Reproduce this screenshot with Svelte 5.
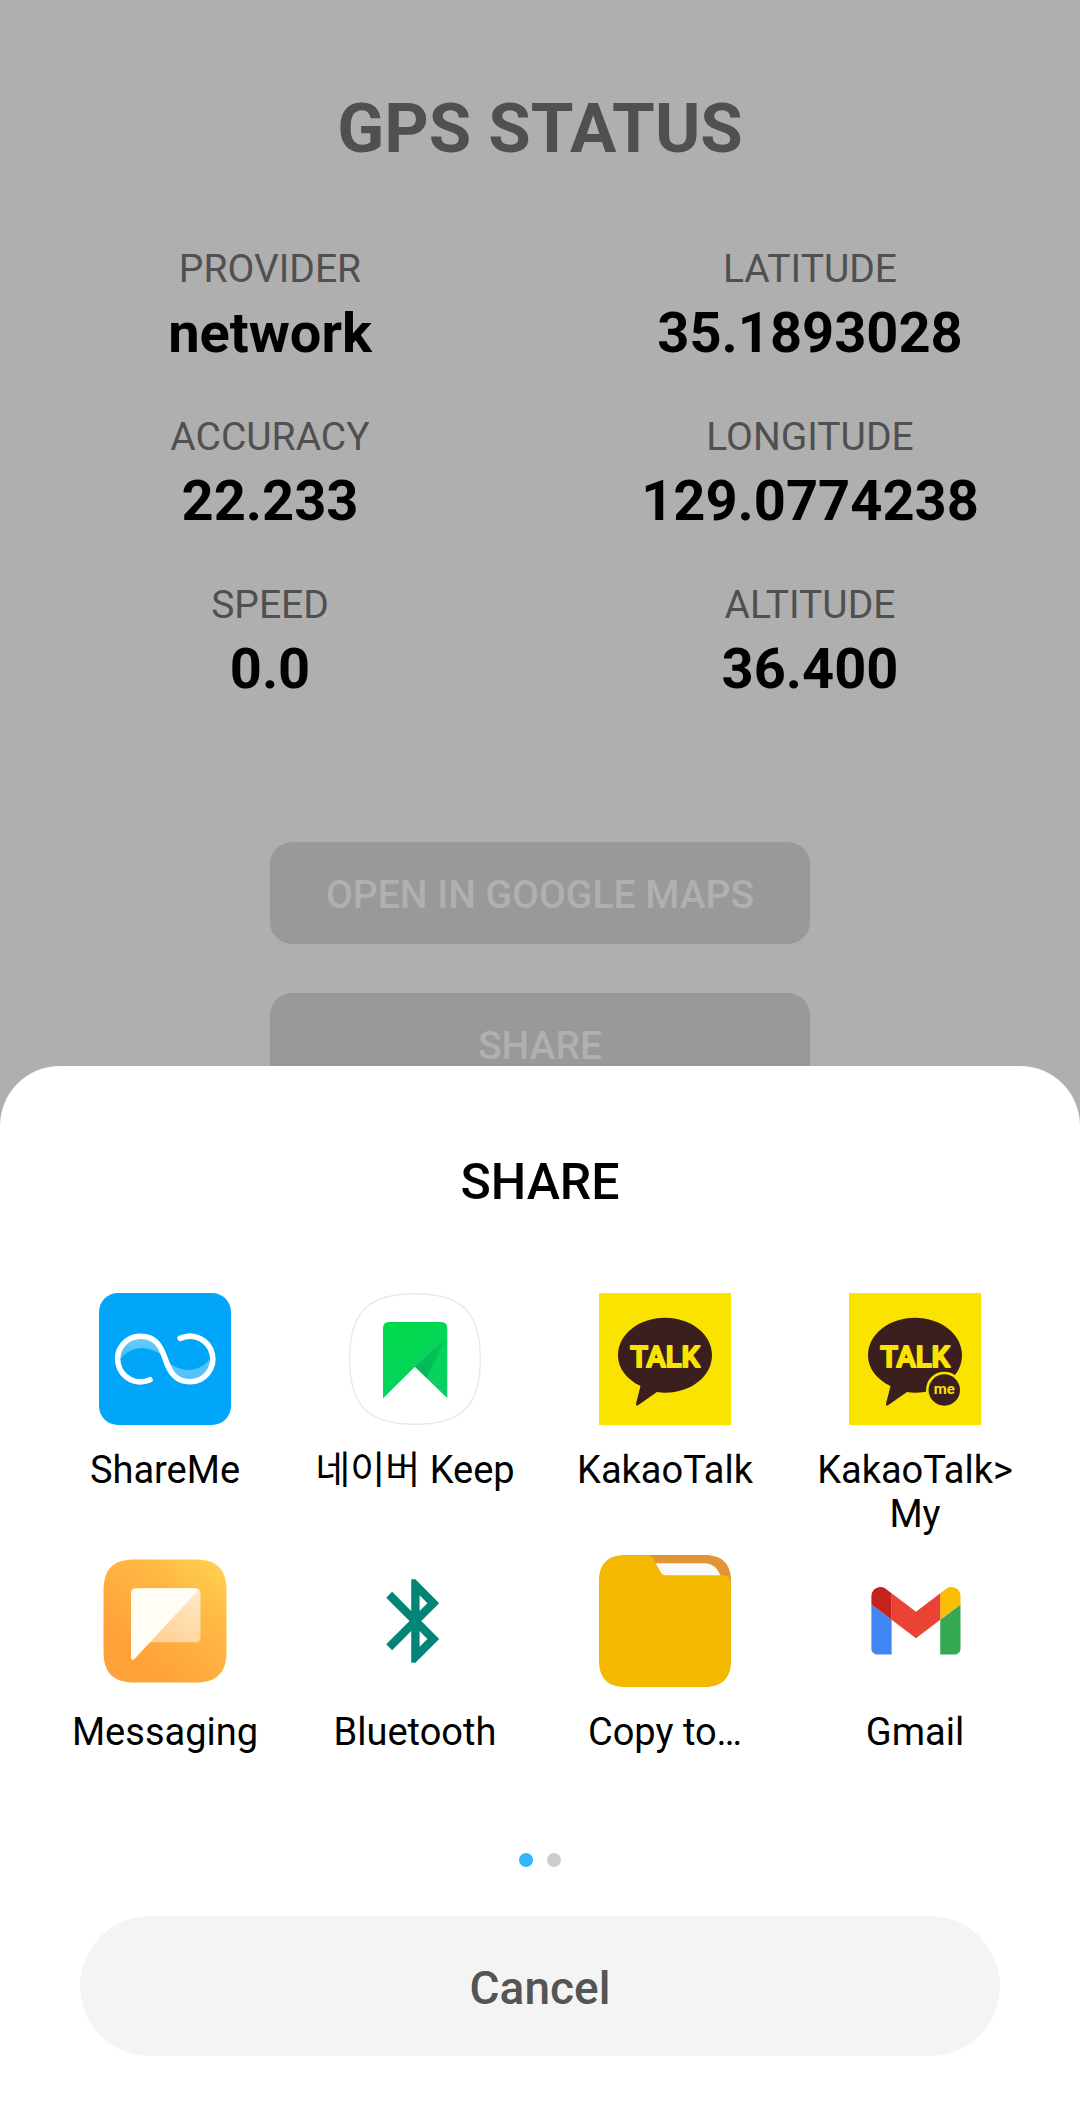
<script>
  const readings = [
    { label: 'PROVIDER', value: 'network' },
    { label: 'LATITUDE', value: '35.1893028' },
    { label: 'ACCURACY', value: '22.233' },
    { label: 'LONGITUDE', value: '129.0774238' },
    { label: 'SPEED', value: '0.0' },
    { label: 'ALTITUDE', value: '36.400' }
  ];

  const targets = [
    { id: 'shareme', name: 'ShareMe' },
    { id: 'keep', name: '네이버 Keep' },
    { id: 'kakao', name: 'KakaoTalk' },
    { id: 'kakaome', name: 'KakaoTalk> My' },
    { id: 'messaging', name: 'Messaging' },
    { id: 'bluetooth', name: 'Bluetooth' },
    { id: 'files', name: 'Copy to…' },
    { id: 'gmail', name: 'Gmail' }
  ];
</script>

{#snippet talk()}
  <rect width="132" height="132" fill="#fbe300" />
  <path
    d="M66 24.7c26 0 47 16.600 47 37.500s-21 37.500-47 37.500q-4 0-8-.7L39 112.200q-2.500 1-2-1.500L41.500 93C28 86.500 19 75.500 19 62.200c0-20.900 21-37.500 47-37.500z"
    fill="#3b1e1e"
  />
  <text class="talk" x="66" y="74" text-anchor="middle">TALK</text>
{/snippet}

<div class="screen">
  <main>
    <h1>GPS STATUS</h1>
    <dl>
      {#each readings as reading}
        <div class="reading">
          <dt>{reading.label}</dt>
          <dd>{reading.value}</dd>
        </div>
      {/each}
    </dl>
    <div class="actions">
      <button type="button">OPEN IN GOOGLE MAPS</button>
      <button type="button">SHARE</button>
    </div>
  </main>

  <section class="sheet" role="dialog" aria-labelledby="sheet-title">
    <h2 id="sheet-title">SHARE</h2>
    <div class="targets">
      {#each targets as target}
        <button type="button" class="target">
          <svg viewBox="0 0 132 132" aria-hidden="true">
            {#if target.id === 'shareme'}
              <defs>
                <linearGradient id="wave" x1="0" y1="0" x2="0" y2="1">
                  <stop offset="0" stop-color="#fff" stop-opacity=".45" />
                  <stop offset="1" stop-color="#fff" stop-opacity=".22" />
                </linearGradient>
              </defs>
              <rect width="132" height="132" rx="19" fill="#02a6f8" />
              <path d="M20 68C20 53 30 43 41.700 43C54 43 60 50 65 64C52 53 33 50 20 68z" fill="url(#wave)" />
              <path d="M112.600 64C112.600 79 102.600 89 91 89C78.600 89 72.600 82 67.600 68C80.600 79 99.600 82 112.600 64z" fill="#fff" fill-opacity=".33" />
              <path
                d="M51 86.700A22.800 22.800 0 1 1 41.700 43.200C56 43.200 61.500 52 66.300 66C71 80 77 88.800 91 88.800A22.800 22.800 0 1 0 81.200 45.400"
                fill="none" stroke="#fff" stroke-width="5.600" stroke-linecap="round"
              />
            {:else if target.id === 'keep'}
              <defs>
                <linearGradient id="leaf" x1="0" y1="0" x2=".6" y2="1">
                  <stop offset="0" stop-color="#00dd48" />
                  <stop offset="1" stop-color="#09cf63" />
                </linearGradient>
                <linearGradient id="fold" x1="0" y1="1" x2="1" y2="0">
                  <stop offset="0" stop-color="#03b556" />
                  <stop offset="1" stop-color="#06c95d" />
                </linearGradient>
              </defs>
              <path
                d="M66 .7C113 .7 131.300 19 131.300 66S113 131.300 66 131.300S.7 113 .7 66S19 .7 66 .7z"
                fill="#fff" stroke="#e9e9e9" stroke-width="1.400"
              />
              <path d="M34 105.300V35q0-6 6-6h52.300q6 0 6 6v70.300L66 73.700z" fill="url(#leaf)" />
              <path d="M66 73.700L97 45L77.500 85z" fill="url(#fold)" />
            {:else if target.id === 'kakao'}
              {@render talk()}
            {:else if target.id === 'kakaome'}
              {@render talk()}
              <circle cx="95.300" cy="97" r="18.300" fill="#fbe300" />
              <circle cx="95.300" cy="97" r="15.700" fill="#3b1e1e" />
              <text class="me" x="95.300" y="101" text-anchor="middle">me</text>
            {:else if target.id === 'messaging'}
              <defs>
                <linearGradient id="sun" x1="1" y1="0" x2=".3" y2=".8">
                  <stop offset="0" stop-color="#ffd552" />
                  <stop offset=".4" stop-color="#ffba45" />
                  <stop offset="1" stop-color="#ffa23a" />
                </linearGradient>
                <linearGradient id="page" x1="1" y1="0" x2=".4" y2="1">
                  <stop offset="0" stop-color="#ffeacb" />
                  <stop offset="1" stop-color="#ffd195" />
                </linearGradient>
              </defs>
              <path
                d="M36 4.500h60C118 4.500 127.500 14 127.500 36v60c0 22-9.500 31.500-31.500 31.500H36C14 127.500 4.500 118 4.500 96V36C4.500 14 14 4.500 36 4.500z"
                fill="url(#sun)"
              />
              <path d="M38 33.300h58q5.500 0 5.500 5.500v43q0 5.500-5.500 5.500H45z" fill="url(#page)" />
              <path d="M37 33.300h59q2.500 0 3.700 1.500L35 104.500q-3 1.500-3-2V38.300q0-5 5-5z" fill="#fffdf6" />
            {:else if target.id === 'bluetooth'}
              <path
                transform="translate(16.400 16) scale(4.167)"
                d="M17.710 7.710L12 2h-1v7.590L6.410 5 5 6.410 10.590 12 5 17.590 6.410 19 11 14.410V22h1l5.710-5.710-4.300-4.290 4.300-4.290zM13 5.830l1.880 1.880L13 9.590V5.830zm1.880 10.460L13 18.170v-3.760l1.880 1.880z"
                fill="#028577"
              />
            {:else if target.id === 'files'}
              <path d="M40 0h66C123 0 132 9 132 26v20H40z" fill="#e39434" />
              <path d="M50 8.300h57q10 1 14.500 12v6H50z" fill="#f9f9f9" />
              <path
                d="M26 0h22q4.500 0 7 5l6.500 12q2 3.300 5.500 3.300h58q5.500 0 6.300 6l.7 12V106C132 123 123 132 106 132H26C9 132 0 123 0 106V26C0 9 9 0 26 0z"
                fill="#f5b800"
              />
            {:else}
              <g transform="translate(-30.300 -10.800) scale(1.013 1.022)">
                <path fill="#4285f4" d="M58 108h14V74L52 59v43c0 3.320 2.690 6 6 6" />
                <path fill="#34a853" d="M120 108h14c3.320 0 6-2.690 6-6V59l-20 15" />
                <path fill="#fbbc04" d="M120 48v26l20-15v-8c0-7.420-8.470-11.650-14.400-7.200" />
                <path fill="#ea4335" d="M72 74V48l24 18 24-18v26L96 92" />
                <path fill="#c5221f" d="M52 51v8l20 15V48l-5.600-4.200c-5.940-4.450-14.400-.22-14.400 7.200" />
              </g>
            {/if}
          </svg>
          <span class="name">{target.name}</span>
        </button>
      {/each}
    </div>
    <div class="dots" role="img" aria-label="Page 1 of 2">
      <span class="dot current"></span>
      <span class="dot"></span>
    </div>
    <button type="button" class="cancel">Cancel</button>
  </section>
</div>

<style>
  :global(body) {
    margin: 0;
    background: #afafaf;
  }

  .screen {
    position: relative;
    box-sizing: border-box;
    min-height: 100vh;
    padding-top: 89px;
    overflow: hidden;
    background: #afafaf;
    font-family: Roboto, 'Noto Sans CJK KR', sans-serif;
  }

  button {
    border: 0;
    padding: 0;
    font-family: inherit;
    cursor: pointer;
  }

  h1 {
    margin: 0 0 77px;
    color: #505050;
    font-size: 69px;
    font-weight: 700;
    line-height: 80px;
    text-align: center;
  }

  dl {
    display: grid;
    grid-template-columns: 1fr 1fr;
    row-gap: 48px;
    margin: 0;
    text-align: center;
  }

  dt {
    margin-bottom: 8px;
    color: #505050;
    font-size: 39px;
    line-height: 46px;
  }

  dd {
    margin: 0;
    color: #000;
    font-size: 56px;
    font-weight: 700;
    line-height: 66px;
  }

  .actions {
    display: flex;
    flex-direction: column;
    align-items: center;
    gap: 49px;
    margin-top: 140px;
  }

  .actions button {
    width: 50%;
    height: 102px;
    padding-top: 4px;
    border-radius: 22px;
    background: #999;
    color: #b0b0b0;
    font-size: 39px;
    font-weight: 500;
    line-height: 46px;
  }

  .sheet {
    position: absolute;
    right: 0;
    bottom: 0;
    left: 0;
    display: flex;
    flex-direction: column;
    padding: 86px 40px 68px;
    border-radius: 60px 60px 0 0;
    background: #fff;
  }

  h2 {
    margin: 0 0 81px;
    color: #000;
    font-size: 50px;
    font-weight: 500;
    line-height: 60px;
    text-align: center;
  }

  .targets {
    display: grid;
    grid-template-columns: repeat(4, 1fr);
    row-gap: 19px;
  }

  .target {
    display: flex;
    flex-direction: column;
    align-items: center;
    gap: 23px;
    background: none;
    color: #000;
    font-size: 38px;
    line-height: 44px;
  }

  .target svg {
    display: block;
    width: 132px;
    height: 132px;
  }

  .name {
    min-height: 88px;
    padding: 0 20px;
    text-align: center;
  }

  .talk {
    fill: #fbe300;
    stroke: #fbe300;
    stroke-width: 2px;
    stroke-linejoin: round;
    font-size: 29px;
    font-weight: 500;
  }

  .me {
    fill: #fbe300;
    font-size: 15px;
    font-weight: 700;
  }

  .dots {
    display: flex;
    justify-content: center;
    gap: 14px;
    margin: 55px 0 49px;
  }

  .dot {
    width: 14px;
    height: 14px;
    border-radius: 50%;
    background: #ccc;
  }

  .dot.current {
    background: #33b4ff;
  }

  .cancel {
    height: 140px;
    margin: 0 40px;
    padding-top: 4px;
    border-radius: 70px;
    background: #f4f4f4;
    color: #555;
    font-size: 46px;
    font-weight: 500;
    line-height: 54px;
  }
</style>
